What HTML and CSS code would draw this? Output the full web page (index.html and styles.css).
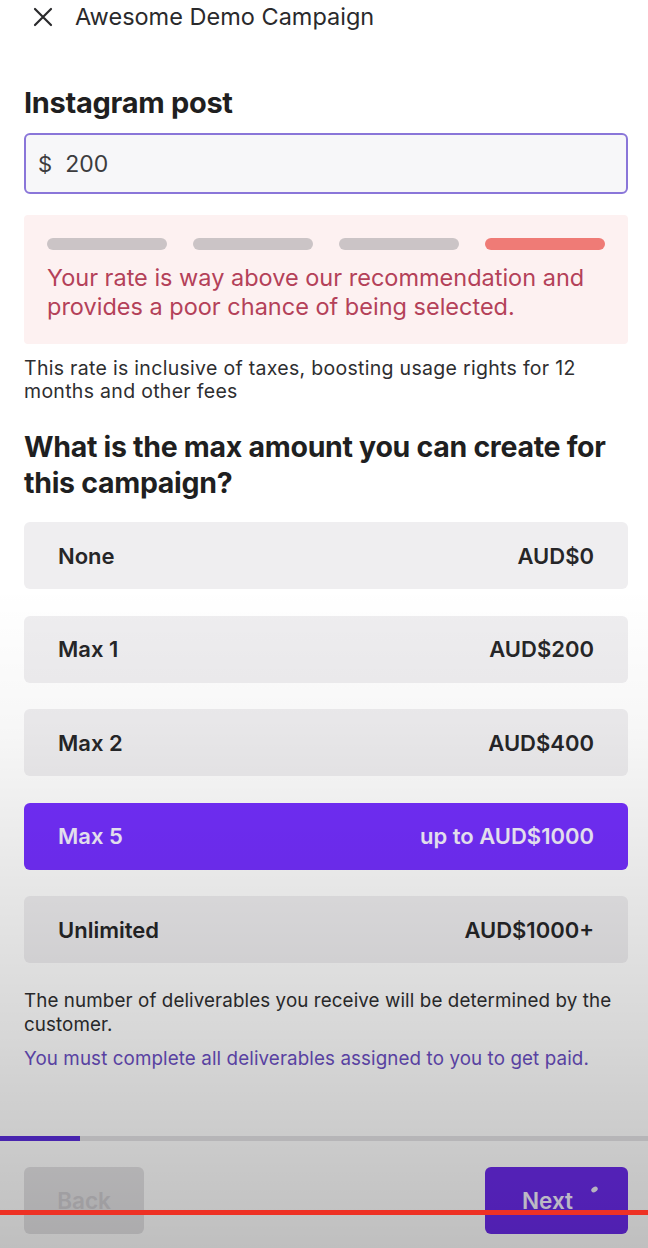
FILE: index.html
```html
<!DOCTYPE html>
<html lang="en">
	<head>
	<meta charset="UTF-8" />
	<meta name="viewport" content="width=device-width, initial-scale=1.0" />
	<title>Awesome Demo Campaign</title>
	<link rel="stylesheet" href="styles.css">
	</head>
	<body>
		<div class="screen">
			<header class="topbar">
				<svg class="close" width="20" height="20" viewBox="0 0 20 20" aria-hidden="true">
					<path d="M2 2 L18 18 M18 2 L2 18" stroke="#2a2a2c" stroke-width="2.2" stroke-linecap="round" fill="none" />
				</svg>
				<span class="title">Awesome Demo Campaign</span>
			</header>
			<main class="content">
				<h1>Instagram post</h1>
				<div class="rate-input"><span class="currency">$</span><span>200</span></div>
				<div class="rate-alert">
					<div class="meter">
						<span></span>
						<span></span>
						<span></span>
						<span class="on"></span>
					</div>
					<p>Your rate is way above our recommendation and provides a poor chance of being selected.</p>
				</div>
				<p class="note">This rate is inclusive of taxes, boosting usage rights for 12 months and other fees</p>
				<h2>What is the max amount you can create for this campaign?</h2>
				<ul class="options">
					<li><span>None</span><span>AUD$0</span></li>
					<li><span>Max 1</span><span>AUD$200</span></li>
					<li><span>Max 2</span><span>AUD$400</span></li>
					<li class="selected"><span>Max 5</span><span>up to AUD$1000</span></li>
					<li><span>Unlimited</span><span>AUD$1000+</span></li>
				</ul>
				<p class="footnote">The number of deliverables you receive will be determined by the customer.</p>
				<p class="footnote accent">You must complete all deliverables assigned to you to get paid.</p>
			</main>
			<div class="progress"><span style="width: 80px"></span></div>
			<footer class="actions">
				<button class="btn back" disabled>Back</button>
				<button class="btn next">Next<i class="spinner"></i></button>
			</footer>
		</div>
		<div class="video-shade"></div>
		<div class="video-scrub"></div>
	</body>
</html>
```

FILE: styles.css
```css
* { box-sizing: border-box; }
html { font-family: Inter, "Noto Sans", sans-serif; }
body { margin: 0; background-color: #ffffff; color: #232325; }
.screen { width: 648px; height: 1248px; display: flex; flex-direction: column; }

.topbar { height: 33px; display: flex; align-items: center; gap: 22px; padding: 0 0 0 33px; }
.topbar .title { font-size: 23.5px; color: #2a2a2c; }
.close { flex: none; }

.content { padding: 0 20px 0 24px; }
h1 { margin: 53px 0 0; font-size: 29px; line-height: 34px; font-weight: 700; color: #1f1f21; letter-spacing: -0.3px; }
.rate-input { margin-top: 13px; height: 61px; border: 2px solid #8a76d9; border-radius: 6px; background: #f7f7f9; display: flex; align-items: center; gap: 13px; padding: 0 12px; font-size: 23px; color: #3c3c3e; }
.rate-input .currency { font-size: 22px; }

.rate-alert { margin-top: 21px; background: #fdf1f1; border-radius: 4px; padding: 23px 12px 23px 23px; }
.meter { display: flex; gap: 26px; }
.meter span { width: 120px; height: 12px; border-radius: 6px; background: #cbc4c6; }
.meter span.on { background: #ef7b76; }
.rate-alert p { margin: 13px 0 0; font-size: 23.5px; line-height: 29px; color: #b44159; }

.note { margin: 13px 0 0; font-size: 19.5px; line-height: 23px; color: #2e2e30; letter-spacing: 0.3px; }
h2 { margin: 26px 0 0; font-size: 28.5px; line-height: 36px; font-weight: 700; color: #1f1f21; letter-spacing: -0.3px; }

.options { list-style: none; margin: 21px 0 0; padding: 0; display: flex; flex-direction: column; gap: 26.5px; }
.options li { height: 67px; border-radius: 6px; background: #efeef0; display: flex; justify-content: space-between; align-items: center; padding: 0 34px; font-size: 22px; font-weight: 600; color: #262628; }
.options li.selected { background: #742fff; color: #f4f0ff; }

.footnote { margin: 26px 0 0; font-size: 18.8px; line-height: 24px; color: #2e2e30; letter-spacing: 0.1px; }
.footnote.accent { margin-top: 10px; color: #6a4ec2; }

.progress { margin-top: auto; height: 5px; background: #e4e3e6; }
.progress span { display: block; height: 100%; background: #5a2ddb; }
.actions { height: 107px; display: flex; justify-content: space-between; padding: 26px 20px 0 24px; }
.btn { height: 67px; border: none; border-radius: 6px; font-family: inherit; font-size: 22.5px; font-weight: 600; position: relative; }
.btn.back { width: 120px; background: #e4e3e5; color: #cfcdd1; }
.btn.next { width: 143px; padding-right: 24px; background: #6a2ae9; color: #f4f0ff; }
.spinner { position: absolute; right: 30px; top: 20px; width: 7px; height: 5px; border-radius: 50%; background: #ece7f7; transform: rotate(-35deg); }

.video-shade { position: absolute; inset: 0; pointer-events: none; background: linear-gradient(to bottom, rgba(0,0,0,0) 0%, rgba(0,0,0,0) 47%, rgba(0,0,0,0.03) 58%, rgba(0,0,0,0.14) 80%, rgba(0,0,0,0.25) 100%); }
.video-scrub { position: absolute; left: 0; right: 0; top: 1210px; height: 5px; background: #ee3124; }
```
